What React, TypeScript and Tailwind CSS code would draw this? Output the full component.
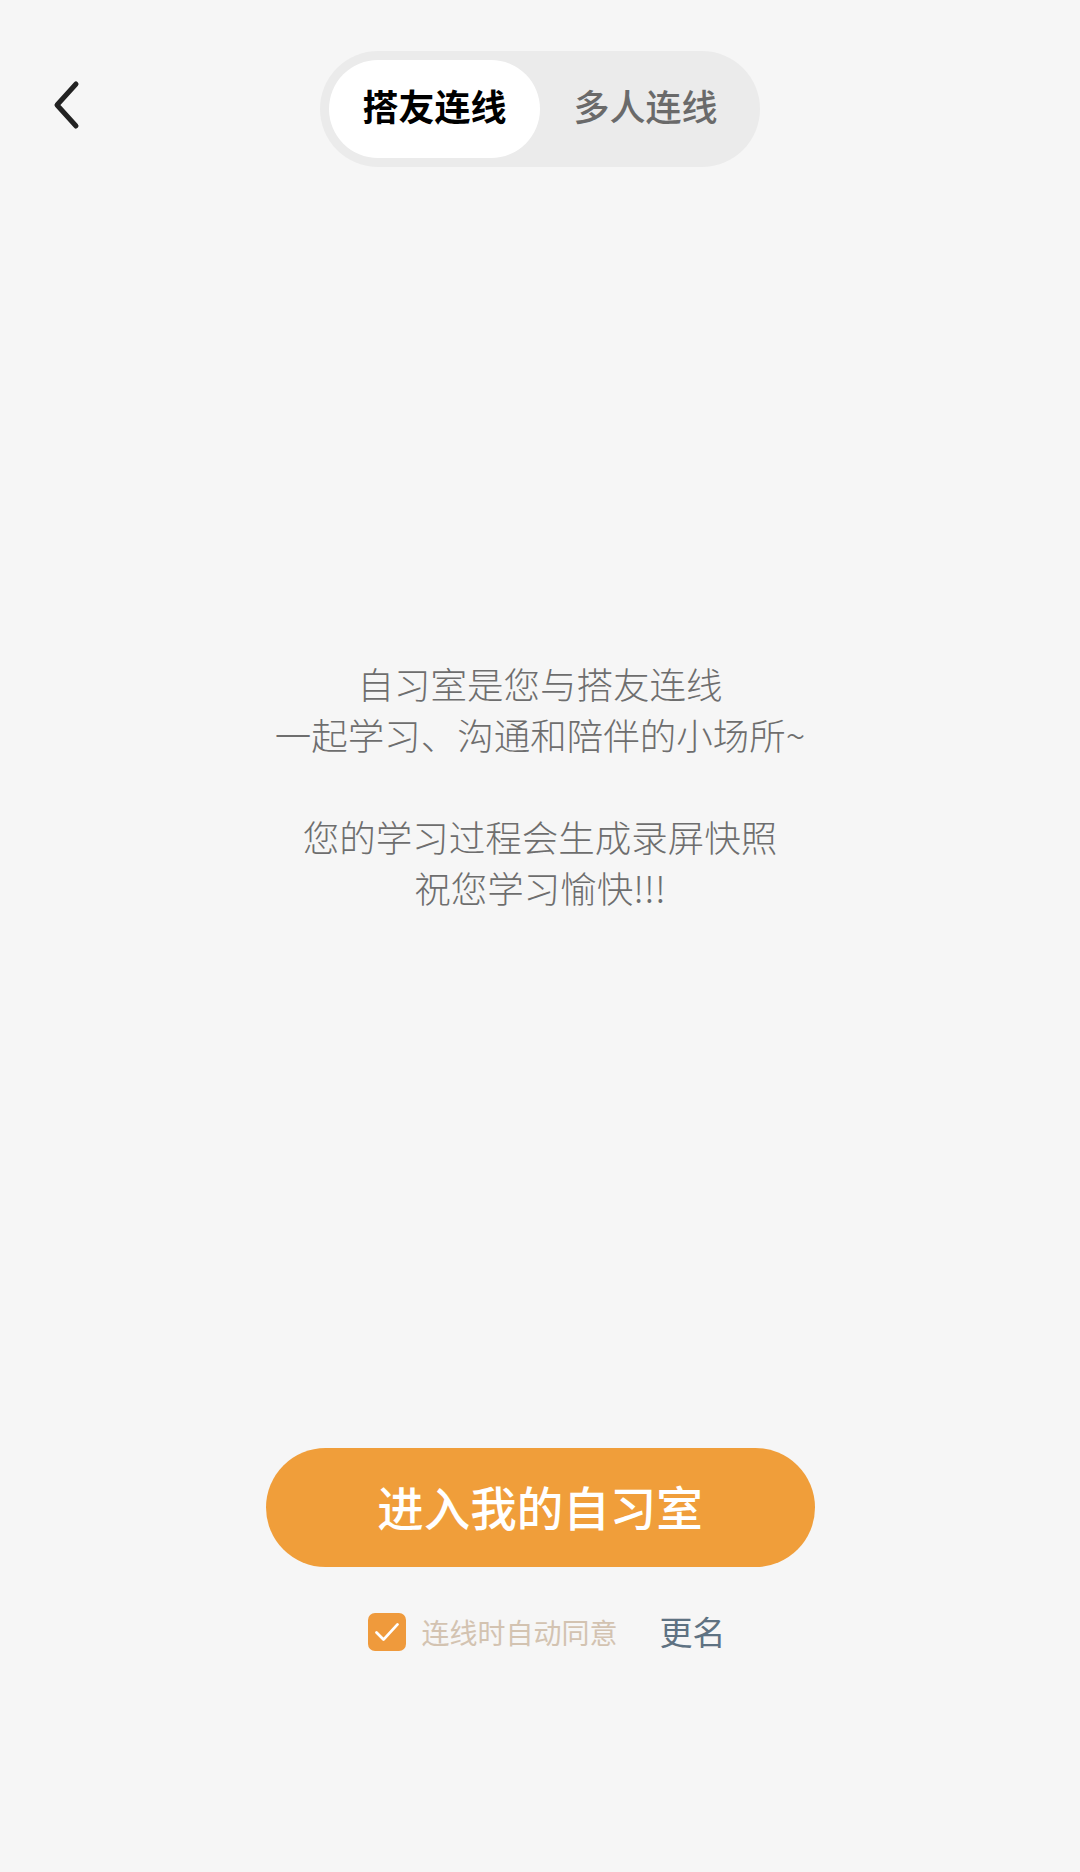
export default function App() {
  return (
    <div
      className="flex h-[1872px] w-[1080px] flex-col items-center bg-[#f6f6f6]"
      style={{ fontFamily: '"Noto Sans CJK SC", "Noto Sans", sans-serif' }}
    >
      {/* Header */}
      <header className="grid w-full grid-cols-[1fr_auto_1fr] items-center pt-[51px]">
        <button className="ml-[36px] flex h-[60px] w-[60px] items-center justify-center justify-self-start pb-[8px]">
          <svg width="34" height="50" viewBox="0 0 34 50" fill="none">
            <path
              d="M27 4 L8 25 L27 46"
              stroke="#222"
              strokeWidth="5"
              strokeLinecap="round"
              strokeLinejoin="round"
            />
          </svg>
        </button>
        <div className="flex h-[116px] w-[440px] items-center rounded-full bg-[#ebebeb] p-[9px]">
          <div className="flex h-full flex-1 items-center justify-center rounded-full bg-white pb-[8px] text-[36px] font-bold text-black">
            搭友连线
          </div>
          <div className="flex h-full flex-1 items-center justify-center pb-[8px] text-[36px] font-medium text-[#6a6a6a]">
            多人连线
          </div>
        </div>
        <div />
      </header>

      {/* Intro */}
      <div className="mt-[491px] text-center text-[36.5px] font-light leading-[51px] text-[#6e6e6e]">
        <p>自习室是您与搭友连线</p>
        <p>一起学习、沟通和陪伴的小场所~</p>
        <p>&nbsp;</p>
        <p>您的学习过程会生成录屏快照</p>
        <p>祝您学习愉快!!!</p>
      </div>

      {/* Enter button */}
      <button className="mt-[535px] flex h-[119px] w-[549px] items-center justify-center rounded-full bg-[#f09e3a] pb-[4px] text-[46.5px] font-medium text-white">
        进入我的自习室
      </button>

      <div className="mt-[40px] ml-[14px] flex items-center">
        <span className="flex h-[38px] w-[38px] items-center justify-center rounded-[7px] bg-[#ef9a3c]">
          <svg width="28" height="28" viewBox="0 0 24 24" fill="none">
            <path
              d="M3 12.5 L9 18.5 L21 5.5"
              stroke="#fff"
              strokeWidth="2.4"
              strokeLinecap="round"
              strokeLinejoin="round"
            />
          </svg>
        </span>
        <span className="ml-[15px] text-[28px] text-[#d3c3b1]">连线时自动同意</span>
        <span className="ml-[42px] text-[33px] text-[#5e7282]">更名</span>
      </div>
    </div>
  );
}
